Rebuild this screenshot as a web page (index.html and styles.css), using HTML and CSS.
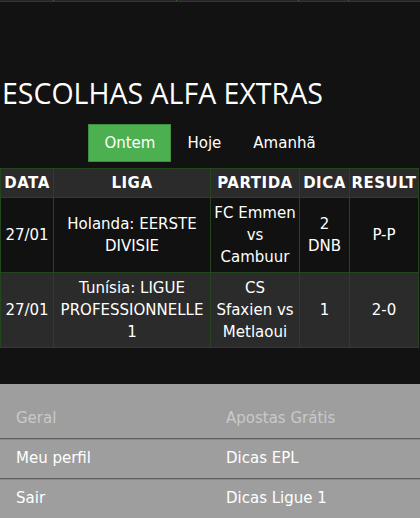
FILE: index.html
```html
<!DOCTYPE html>
<html lang="pt">
<head>
	<meta charset="UTF-8">
	<title>Escolhas Alfa Extras</title>
	<link rel="stylesheet" href="styles.css">
</head>
<body>

<!-- fim da tabela anterior -->
	<div class="prev-strip">
		<span class="c1"></span>
		<span class="c2"></span>
		<span class="c3"></span>
		<span class="c4"></span>
		<span class="c5"></span>
	</div>

	<h2 class="section-title">ESCOLHAS ALFA EXTRAS</h2>

	<div class="day-tabs">
		<a href="javascript:;" class="tab active">Ontem</a>
		<a href="javascript:;" class="tab">Hoje</a>
		<a href="javascript:;" class="tab">Amanhã</a>
	</div>

	<table class="tips-table">
		<thead>
			<tr>
				<th class="col-data">DATA</th>
				<th class="col-liga">LIGA</th>
				<th class="col-partida">PARTIDA</th>
				<th class="col-dica">DICA</th>
				<th class="col-result">RESULT</th>
			</tr>
		</thead>
		<tbody>
			<tr class="row-dark">
				<td>27/01</td>
				<td>Holanda: EERSTE DIVISIE</td>
				<td>FC Emmen vs Cambuur</td>
				<td>2 DNB</td>
				<td>P-P</td>
			</tr>
			<tr class="row-light">
				<td>27/01</td>
				<td>Tunísia: LIGUE PROFESSIONNELLE 1</td>
				<td>CS<br>Sfaxien vs Metlaoui</td>
				<td>1</td>
				<td>2-0</td>
			</tr>
		</tbody>
	</table>

<!-- rodapé -->
	<div class="footer">
		<ul class="footer-list">
			<li class="footer-head">Geral</li>
			<li><a href="javascript:;">Meu perfil</a></li>
			<li><a href="javascript:;">Sair</a></li>
		</ul>
		<ul class="footer-list">
			<li class="footer-head">Apostas Grátis</li>
			<li><a href="javascript:;">Dicas EPL</a></li>
			<li><a href="javascript:;">Dicas Ligue 1</a></li>
		</ul>
	</div>

</body>
</html>
```

FILE: styles.css
```css
body,
h2,
ul,
li,
table {
    margin: 0px;
    padding: 0px;
}

body {
    background: #121212;
    color: #ffffff;
    font-family: "DejaVu Sans", Verdana, sans-serif;
    height: 518px;
    overflow: hidden;
}

a {
    text-decoration: none;
    color: #ffffff;
}

.prev-strip {
    display: flex;
    height: 1px;
    background: #262626;
    border-bottom: 1px solid #24421f;
}

.prev-strip span {
    border-right: 1px solid #2f6a25;
}

.prev-strip .c1 { width: 53px; }
.prev-strip .c2 { width: 122px; }
.prev-strip .c3 { width: 121px; }
.prev-strip .c4 { width: 49px; }
.prev-strip .c5 { flex: 1; border-right: none; }

.section-title {
    margin-top: 71px;
    padding-left: 2px;
    font-family: "Open Sans", sans-serif;
    font-weight: normal;
    font-size: 28.5px;
    line-height: 40px;
}

.day-tabs {
    display: flex;
    justify-content: center;
    margin-top: 11px;
}

.tab {
    padding: 0px 16px;
    line-height: 38px;
    font-size: 15px;
}

.tab.active {
    background: #4caf50;
    box-shadow: inset 0 0 0 1px #3d8f40;
}

.tips-table {
    margin-top: 6px;
    width: 419px;
    table-layout: fixed;
    border-collapse: collapse;
    font-size: 15px;
    text-align: center;
}

.tips-table th,
.tips-table td {
    border: 1px solid #24461d;
    padding: 4px 2px;
}

.tips-table th {
    background: #2b2b2b;
    font-weight: bold;
    letter-spacing: 0.5px;
    line-height: 20px;
    padding: 4px 0px;
}

.tips-table td {
    line-height: 22px;
}

.col-data { width: 52px; }
.col-liga { width: 156px; }
.col-partida { width: 88px; }
.col-dica { width: 49px; }

.row-dark td {
    background: #111111;
}

.row-light td {
    background: #2b2b2b;
}

.footer {
    margin-top: 36px;
    padding-top: 15px;
    background: #9e9e9e;
    display: grid;
    grid-template-columns: 210px 1fr;
}

.footer-list {
    list-style: none;
    font-size: 15px;
}

.footer-list li {
    height: 39px;
    line-height: 39px;
    padding-left: 16px;
    border-bottom: 1px solid #5e5e5e;
    box-shadow: 0 1px 0 #8a8a8a;
}

.footer-head {
    color: #c9c9c9;
}
```
